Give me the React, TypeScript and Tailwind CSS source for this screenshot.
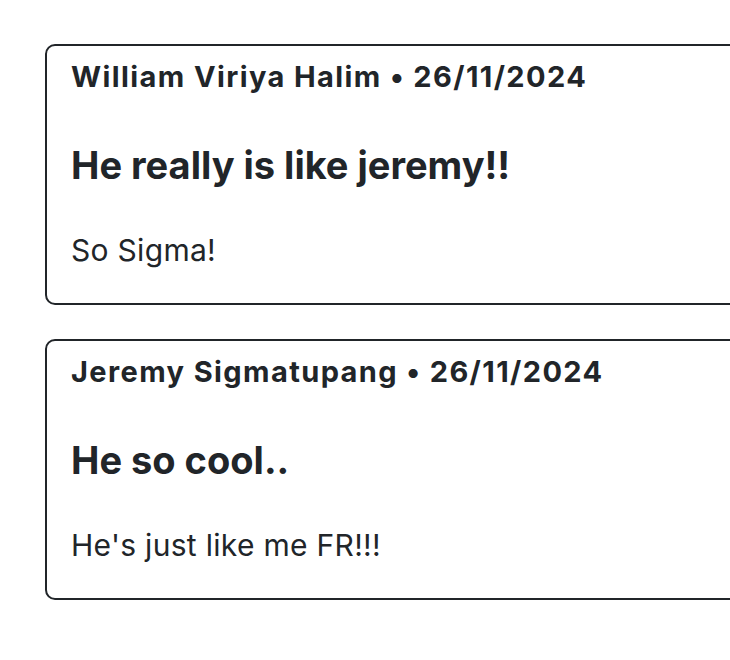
const posts = [
  {
    author: "William Viriya Halim",
    date: "26/11/2024",
    title: "He really is like jeremy!!",
    body: "So Sigma!",
  },
  {
    author: "Jeremy Sigmatupang",
    date: "26/11/2024",
    title: "He so cool..",
    body: "He's just like me FR!!!",
  },
];

function PostCard({ author, date, title, body }: (typeof posts)[number]) {
  return (
    <div className="w-[720px] shrink-0 border-2 border-[#212529] rounded-[10px] px-6 pt-[14px] pb-[37px]">
      <div className="text-[29px] leading-[34px] font-bold tracking-[1.4px]">
        {author} • {date}
      </div>
      <h2 className="mt-[49px] text-[38px] leading-[44px] font-bold">{title}</h2>
      <p className="mt-[47px] text-[30px] leading-[32px] tracking-[0.3px]">{body}</p>
    </div>
  );
}

export default function App() {
  return (
    <div
      className="w-[730px] h-[660px] overflow-hidden bg-white text-[#212529] pl-[45px] pt-[44px]"
      style={{ fontFamily: "Inter, 'Noto Sans', sans-serif" }}
    >
      <div className="flex flex-col gap-[34px]">
        {posts.map((p) => (
          <PostCard key={p.author} {...p} />
        ))}
      </div>
    </div>
  );
}
